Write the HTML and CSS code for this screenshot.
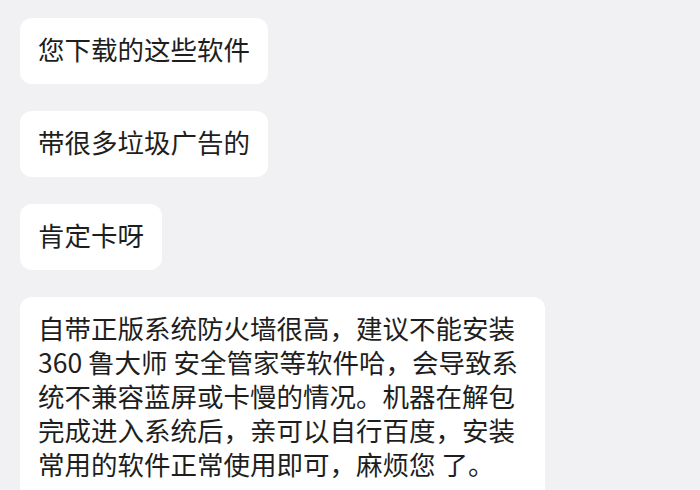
FILE: index.html
```html
<!DOCTYPE html>
<html lang="zh-CN">
<head>
  <meta charset="UTF-8" />
  <meta name="viewport" content="width=device-width, initial-scale=1" />
  <title>聊天记录</title>
  <link rel="stylesheet" href="styles.css">
</head>
<body>
<main class="chat">
  <div class="msg">您下载的这些软件</div>
  <div class="msg">带很多垃圾广告的</div>
  <div class="msg">肯定卡呀</div>
  <div class="msg">自带正版系统防火墙很高，建议不能安装360 鲁大师 安全管家等软件哈，会导致系统不兼容蓝屏或卡慢的情况。机器在解包完成进入系统后，亲可以自行百度，安装常用的软件正常使用即可，麻烦您 了。</div>
</main>
</body>
</html>
```

FILE: styles.css
```css
body {
  margin: 0;
  padding: 0;
  background: #f1f0f2;
  color: #1e1e1e;
  font-family: "Noto Sans CJK SC", "Noto Sans", sans-serif;
  overflow: hidden;
}
.chat {
  display: flex;
  flex-direction: column;
  align-items: flex-start;
  gap: 27px;
  padding: 18px 20px;
}
.msg {
  background: #fff;
  border-radius: 12px;
  padding: 14px 18px 18px;
  font-size: 26.5px;
  line-height: 34px;
  max-width: 489px;
}
```
